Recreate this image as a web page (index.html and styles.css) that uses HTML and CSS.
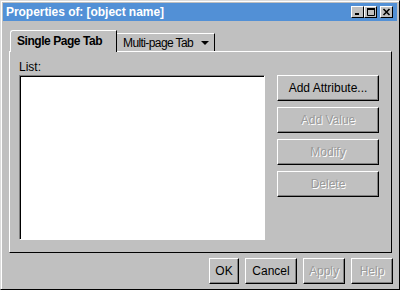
FILE: index.html
```html
<!DOCTYPE html>
<html lang="en">
  <head>
    <meta charset="UTF-8" />
    <title>Properties of: [object name]</title>
    <link rel="stylesheet" href="styles.css">
  </head>
  <body>
    <div class="window">
      <div class="titlebar">
        <span class="title">Properties of: [object name]</span>
        <div class="wm-buttons">
          <span class="wm-btn">
            <svg width="11" height="10" viewBox="0 0 11 10"><rect x="3" y="6" width="4" height="2" fill="#000"/></svg>
          </span>
          <span class="wm-btn">
            <svg width="11" height="10" viewBox="0 0 11 10"><path d="M2.5 1.5h7v7h-7z" fill="none" stroke="#000"/><rect x="2" y="1" width="8" height="2" fill="#000"/></svg>
          </span>
          <span class="wm-btn close">
            <svg width="11" height="10" viewBox="0 0 11 10"><path d="M2.5 2l6 6M8.5 2l-6 6" stroke="#000" stroke-width="1.6"/></svg>
          </span>
        </div>
      </div>

      <div class="body">
        <div class="tabs">
          <div class="tab active">Single Page Tab</div>
          <div class="tab">
            <span>Multi-page Tab</span>
            <svg width="8" height="4" viewBox="0 0 8 4"><path d="M0 0h8l-4 4z" fill="#000"/></svg>
          </div>
        </div>

        <div class="panel">
          <div class="list-col">
            <label for="attrList">List:</label>
            <div class="listbox" id="attrList"></div>
          </div>
          <div class="side-buttons">
            <button>Add Attribute...</button>
            <button disabled>Add Value</button>
            <button disabled>Modify</button>
            <button disabled>Delete</button>
          </div>
        </div>

        <div class="footer">
          <button class="ok">OK</button>
          <button class="cancel">Cancel</button>
          <button class="apply" disabled>Apply</button>
          <button class="help" disabled>Help</button>
        </div>
      </div>
    </div>
  </body>
</html>
```

FILE: styles.css
```css
body {
  margin: 0;
  font-family: "Liberation Sans", Arial, sans-serif;
  font-size: 12px;
  background-color: #c0c0c0;
}
.window {
  width: 400px;
  height: 290px;
  box-sizing: border-box;
  display: flex;
  flex-direction: column;
  padding: 2px;
  border: 1px solid;
  border-color: #dcdcdc #000 #000 #dcdcdc;
  box-shadow: inset 1px 1px #fff;
  background-color: #c0c0c0;
}
.titlebar {
  height: 18px;
  display: flex;
  align-items: center;
  justify-content: space-between;
  padding: 0 4px 0 3px;
  background-color: #5290d6;
}
.title {
  color: #fff;
  font-weight: bold;
  font-size: 12px;
  letter-spacing: -0.05px;
}
.wm-buttons {
  display: flex;
}
.wm-btn {
  width: 13px;
  height: 12px;
  box-sizing: border-box;
  display: flex;
  align-items: center;
  justify-content: center;
  background-color: #c0c0c0;
  border: 1px solid;
  border-color: #fff #000 #000 #fff;
}
.wm-btn.close {
  margin-left: 3px;
}
.body {
  flex: 1;
  display: flex;
  flex-direction: column;
  padding: 9px 0 0 6px;
}
.tabs {
  display: flex;
  align-items: flex-end;
  padding-left: 1px;
}
.tab {
  box-sizing: border-box;
  height: 18px;
  width: 98px;
  display: flex;
  align-items: center;
  justify-content: space-between;
  padding: 0 5px 0 6px;
  font-size: 12px;
  letter-spacing: -0.6px;
  border-top: 1px solid #fff;
  border-right: 1px solid #000;
}
.tab.active {
  position: relative;
  z-index: 1;
  height: 22px;
  width: 107px;
  margin-bottom: -1px;
  align-items: flex-start;
  padding-top: 3px;
  font-weight: bold;
  letter-spacing: -0.45px;
  border-left: 1px solid #fff;
  border-top-left-radius: 3px;
  background-color: #c0c0c0;
}
.panel {
  flex: 0 0 202px;
  box-sizing: border-box;
  display: flex;
  gap: 12px;
  margin-right: 5px;
  padding: 8px 12px 12px 9px;
  border: 1px solid;
  border-color: #fff #000 #000 #fff;
}
.list-col {
  flex: 1;
  display: flex;
  flex-direction: column;
}
label {
  line-height: 14px;
  margin-bottom: 1px;
}
.listbox {
  flex: 1;
  background-color: #fff;
  border: 1px solid;
  border-color: #808080 #fff #fff #808080;
  box-shadow: inset 1px 1px #000;
}
.side-buttons {
  width: 102px;
  display: flex;
  flex-direction: column;
  gap: 6px;
  padding-top: 15px;
}
button {
  height: 26px;
  padding: 0;
  font-family: "Liberation Sans", Arial, sans-serif;
  font-size: 12px;
  color: #000;
  background-color: #c0c0c0;
  border: 1px solid;
  border-color: #fff #000 #000 #fff;
  box-shadow: inset -1px -1px #808080;
}
button:disabled {
  color: #9a9a9a;
  text-shadow: 1px 1px #fff;
}
.footer {
  display: flex;
  justify-content: flex-end;
  gap: 6px;
  margin: 5px 4px 0 0;
}
.footer .ok {
  width: 30px;
}
.footer .cancel {
  width: 52px;
}
.footer .apply,
.footer .help {
  width: 42px;
}
```
